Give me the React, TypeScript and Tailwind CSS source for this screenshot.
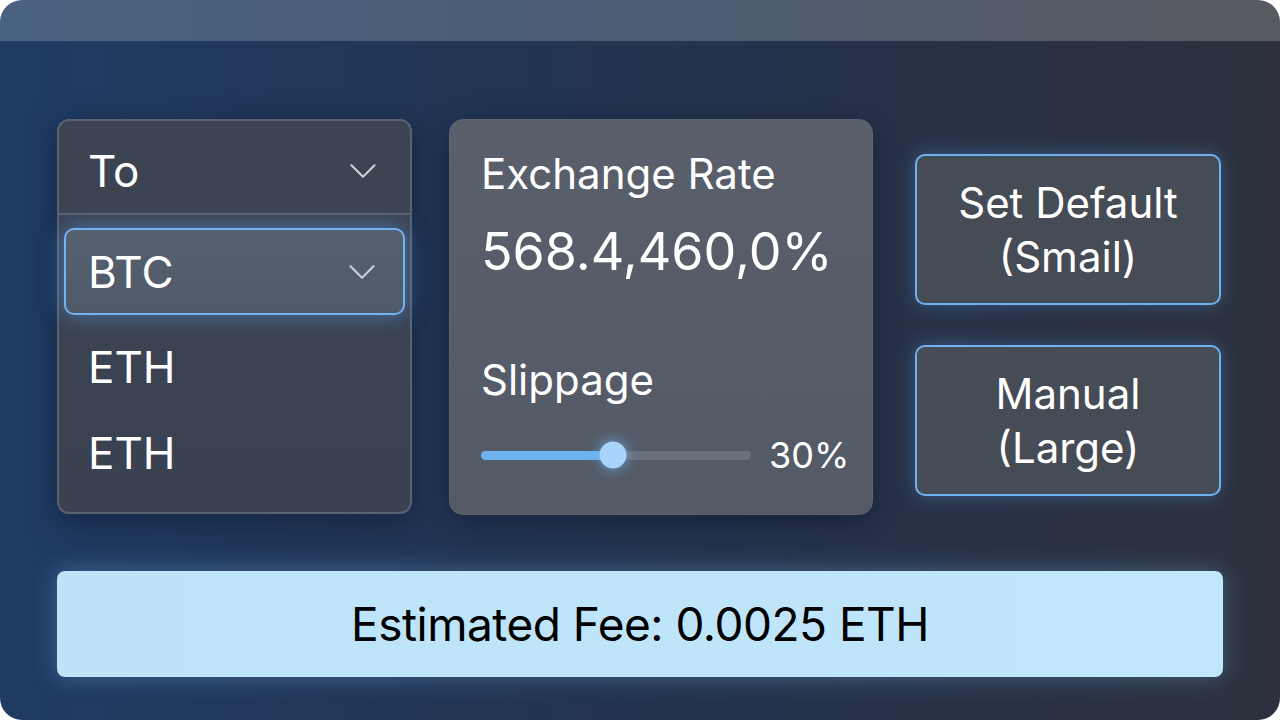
import { ChevronDown } from 'lucide-react';

const font = { fontFamily: 'Inter, "Noto Sans", sans-serif' };

function SwapSettings() {
  const slippage = 30;
  const fill = 49; // percent of the track filled to the thumb

  return (
    <div className="h-[720px] w-[1280px] bg-white" style={font}>
      <div className="flex h-full w-full flex-col overflow-hidden rounded-[22px]">
        {/* title strip */}
        <div className="h-[41px] shrink-0 bg-gradient-to-r from-[#4a6282] via-[#4c5b72] to-[#575a60]" />

        {/* body */}
        <div className="flex flex-1 flex-col bg-gradient-to-r from-[#1f3b64] via-[#24334f] to-[#2c313d] px-[57px] pt-[78px]">
          <div className="flex items-start">
            {/* token dropdown */}
            <div className="flex h-[395px] w-[355px] shrink-0 flex-col rounded-[12px] border-2 border-[#5a6272] bg-gradient-to-b from-[#3c4452] to-[#3a4150] shadow-[0_8px_30px_rgba(10,20,40,0.5)]">
              <div className="flex h-[94px] items-center justify-between border-b-2 border-[#586070] pl-[29px] pr-[24px] pt-[8px]">
                <span className="text-[44px] leading-none text-white">To</span>
                <ChevronDown className="h-[46px] w-[46px] text-[#c8ccd4]" strokeWidth={1.15} />
              </div>
              <div className="px-[5px] pt-[13px]">
                <div className="flex h-[87px] items-center justify-between rounded-[10px] border-2 border-[#70b4f4] bg-gradient-to-b from-[#566170] to-[#4f5967] pl-[22px] pr-[18px] shadow-[0_0_22px_rgba(90,160,240,0.55)]">
                  <span className="text-[44px] leading-none text-white">BTC</span>
                  <ChevronDown className="h-[46px] w-[46px] text-[#c8ccd4]" strokeWidth={1.15} />
                </div>
              </div>
              <div className="flex h-[92px] items-center pl-[29px] pt-[12px] text-[44px] leading-none text-white">ETH</div>
              <div className="flex h-[88px] items-center pl-[29px] pt-[4px] text-[44px] leading-none text-white">ETH</div>
            </div>

            {/* rate + slippage */}
            <div className="ml-[37px] flex h-[396px] w-[424px] shrink-0 flex-col rounded-[14px] border border-[#5d6470] bg-gradient-to-b from-[#59606c] to-[#535a66] px-[31px] pt-[28px] shadow-[0_8px_30px_rgba(10,20,40,0.5)]">
              <span className="text-[42px] leading-[52px] text-white">Exchange Rate</span>
              <span className="mt-[22px] text-[52px] leading-[60px] text-white">568.4,460,0%</span>
              <span className="mt-[72px] text-[42px] leading-[52px] text-white">Slippage</span>
              <div className="mt-[31px] flex items-center">
                <div className="relative h-[9px] w-[270px] shrink-0 rounded-full bg-[#6a707b]">
                  <div className="h-full rounded-full bg-[#6fb2f2]" style={{ width: `${fill}%` }} />
                  <div
                    className="absolute top-1/2 h-[27px] w-[27px] -translate-x-1/2 -translate-y-1/2 rounded-full bg-[#a9d4fa] shadow-[0_0_14px_rgba(110,180,245,0.8)]"
                    style={{ left: `${fill}%` }}
                  />
                </div>
                <span className="ml-[18px] text-[36px] leading-none text-white">{slippage}%</span>
              </div>
            </div>

            {/* fee presets */}
            <div className="ml-[42px] mt-[35px] flex w-[306px] shrink-0 flex-col gap-[40px]">
              <button className="flex h-[151px] flex-col items-center justify-center rounded-[10px] border-2 border-[#6fb2f2] bg-[#464c56] text-[42px] leading-[54px] text-white shadow-[0_0_18px_rgba(90,160,240,0.35)]">
                <span>Set Default</span>
                <span>(Smail)</span>
              </button>
              <button className="flex h-[151px] flex-col items-center justify-center rounded-[10px] border-2 border-[#6fb2f2] bg-[#464c56] text-[42px] leading-[54px] text-white shadow-[0_0_18px_rgba(90,160,240,0.35)]">
                <span>Manual</span>
                <span>(Large)</span>
              </button>
            </div>
          </div>

          {/* fee summary */}
          <div className="mt-[56px] flex h-[106px] w-[1166px] items-center justify-center rounded-[8px] bg-gradient-to-r from-[#bde3f8] to-[#c0e6fb] shadow-[0_0_24px_rgba(120,190,240,0.35)]">
            <span className="text-[46px] tracking-[-0.5px] text-black">Estimated Fee: 0.0025 ETH</span>
          </div>
        </div>
      </div>
    </div>
  );
}

export default function App() {
  return <SwapSettings />;
}
